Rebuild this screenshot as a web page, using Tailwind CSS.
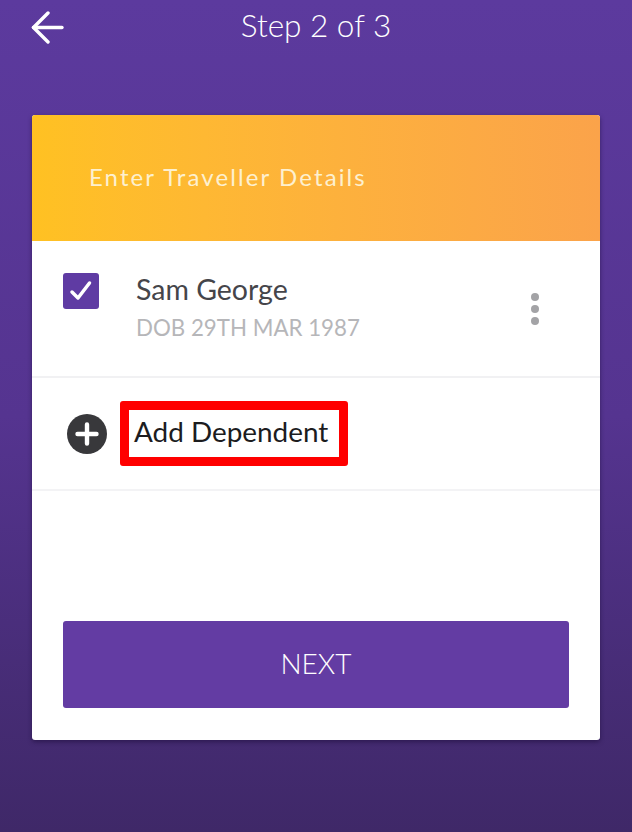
<!DOCTYPE html>
<html>
<head>
<meta charset="utf-8">
<script src="https://cdn.jsdelivr.net/npm/@tailwindcss/browser@4"></script>
</head>
<body class="m-0">
<div class="w-[632px] h-[832px] overflow-hidden flex flex-col bg-gradient-to-b from-[#5c3a9e] via-[#553490] via-50% to-[#3f2868] font-['Lato','Liberation_Sans',sans-serif]">
  <header class="h-[115px] shrink-0 flex items-start relative">
    <svg class="absolute left-[31px] top-[11px] w-[34px] h-[34px]" viewBox="0 0 34 34" fill="none" stroke="#fff" stroke-width="3.4" stroke-linecap="round" stroke-linejoin="round"><path d="M2.5 16.5H31"/><path d="M17 2 2.5 16.5 17 31"/></svg>
    <h1 class="w-full text-center text-[31.5px] leading-[50px] text-white font-light">Step 2 of 3</h1>
  </header>
  <main class="mx-[32px] w-[568px] h-[625px] bg-white rounded-[3px] shadow-[0_2px_4px_rgba(30,15,60,0.6)] flex flex-col overflow-hidden">
    <div class="h-[126px] shrink-0 bg-gradient-to-r from-[#ffc122] to-[#fba34a] flex items-center pl-[57px] pb-[2px]">
      <span class="text-[24px] tracking-[2.1px] text-[#fdf0cf]">Enter Traveller Details</span>
    </div>
    <div class="h-[137px] shrink-0 border-b-2 border-[#f1f1f3] flex items-start pl-[31px] pr-[61px]">
      <div class="mt-[32px] w-[36px] h-[36px] rounded-[3px] bg-[#5f3ba3] flex items-center justify-center shrink-0">
        <svg class="w-[26px] h-[26px]" viewBox="0 0 26 26" fill="none" stroke="#fff" stroke-width="3.5" stroke-linecap="round" stroke-linejoin="round"><path d="M4 14l6 6L21.5 5"/></svg>
      </div>
      <div class="ml-[37px] flex-1 pt-[30px]">
        <div class="text-[28.5px] leading-[36px] text-[#45454a]">Sam George</div>
        <div class="text-[22.3px] leading-[32px] mt-[5px] text-[#b6b6b9]">DOB 29TH MAR 1987</div>
      </div>
      <div class="mt-[52px] flex flex-col gap-[4px]">
        <span class="block w-[8px] h-[8px] rounded-full bg-[#a3a3a6]"></span>
        <span class="block w-[8px] h-[8px] rounded-full bg-[#a3a3a6]"></span>
        <span class="block w-[8px] h-[8px] rounded-full bg-[#a3a3a6]"></span>
      </div>
    </div>
    <div class="h-[113px] shrink-0 border-b-2 border-[#f3f3f5] flex items-center pl-[35px]">
      <svg class="w-[40px] h-[40px] shrink-0" viewBox="0 0 40 40"><circle cx="20" cy="20" r="20" fill="#38383b"/><path d="M20 10.5v19M10.5 20h19" stroke="#fff" stroke-width="4.4" stroke-linecap="round"/></svg>
      <div class="ml-[13px] w-[228px] h-[65px] border-[9px] border-[#ff0000] rounded-[3px] bg-white flex items-center pl-[5px] pb-[3px]">
        <span class="text-[27.9px] leading-none text-[#1c1c1e] whitespace-nowrap">Add Dependent</span>
      </div>
    </div>
    <div class="flex-1 flex flex-col px-[31px] pt-[130px]">
      <button class="w-full h-[87px] pb-[4px] rounded-[3px] bg-[#633ca3] text-white text-[28px] font-light">NEXT</button>
    </div>
  </main>
</div>
</body>
</html>
